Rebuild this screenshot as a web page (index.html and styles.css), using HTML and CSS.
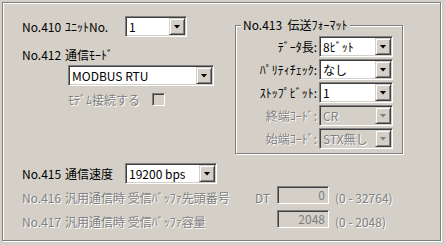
FILE: index.html
```
<!DOCTYPE html>
<html lang="ja">
<head>
<meta charset="utf-8">
<link rel="stylesheet" href="styles.css">
</head>
<body>
<div class="frame">
  <div class="top">
    <div class="left">
      <div class="row">
        <span class="no">No.410</span><span class="lbl">ﾕﾆｯﾄNo.</span>
        <div class="combo w-unit"><span class="val">1</span><span class="btn"></span></div>
      </div>
      <div class="row row-412">
        <span class="no">No.412</span><span class="lbl">通信ﾓｰﾄﾞ</span>
      </div>
      <div class="combo w-mode"><span class="val">MODBUS RTU</span><span class="btn"></span></div>
      <div class="modem">
        <span class="dis">ﾓﾃﾞﾑ接続する</span><span class="check"></span>
      </div>
    </div>
    <div class="group">
      <span class="gtitle">No.413&nbsp; 伝送ﾌｫｰﾏｯﾄ</span>
      <div class="grid">
        <span class="glbl">ﾃﾞｰﾀ長:</span>
        <div class="combo"><span class="val">8ﾋﾞｯﾄ</span><span class="btn"></span></div>
        <span class="glbl">ﾊﾟﾘﾃｨﾁｪｯｸ:</span>
        <div class="combo"><span class="val">なし</span><span class="btn"></span></div>
        <span class="glbl">ｽﾄｯﾌﾟﾋﾞｯﾄ:</span>
        <div class="combo"><span class="val">1</span><span class="btn"></span></div>
        <span class="glbl dis">終端ｺｰﾄﾞ:</span>
        <div class="combo disabled"><span class="val">CR</span><span class="btn"></span></div>
        <span class="glbl dis">始端ｺｰﾄﾞ:</span>
        <div class="combo disabled"><span class="val">STX無し</span><span class="btn"></span></div>
      </div>
    </div>
  </div>
  <div class="bottom">
    <div class="row">
      <span class="no">No.415</span><span class="lbl">通信速度</span>
      <div class="combo w-speed"><span class="val">19200 bps</span><span class="btn"></span></div>
    </div>
    <div class="row row-buf">
      <span class="no dis">No.416</span><span class="lbl lbl-long dis">汎用通信時 受信ﾊﾞｯﾌｧ先頭番号</span>
      <span class="dt dis">DT</span>
      <span class="tbox">0</span>
      <span class="range dis">(0 - 32764)</span>
    </div>
    <div class="row row-buf row-417">
      <span class="no dis">No.417</span><span class="lbl lbl-long dis">汎用通信時 受信ﾊﾞｯﾌｧ容量</span>
      <span class="dt dis"></span>
      <span class="tbox">2048</span>
      <span class="range dis">(0 - 2048)</span>
    </div>
  </div>
</div>
</body>
</html>
```

FILE: styles.css
```
html, body {
  margin: 0;
  padding: 0;
  background: #d4d0c8;
}
body {
  font-family: "Noto Sans CJK JP", "Noto Sans", sans-serif;
  font-size: 12px;
  line-height: 14px;
  color: #000;
  width: 445px;
  height: 245px;
  overflow: hidden;
}
.frame {
  box-sizing: border-box;
  margin: 2px 0 0 2px;
  width: 439px;
  height: 239px;
  border: 1px solid #808080;
  box-shadow: inset 1px 1px 0 #fff, 1px 1px 0 #fff;
  padding: 13px 0 0 19px;
}
.top {
  display: flex;
  align-items: flex-start;
}
.left {
  width: 213px;
  display: flex;
  flex-direction: column;
  align-items: flex-start;
}
.row {
  display: flex;
  align-items: center;
  height: 21px;
}
.no {
  width: 43px;
  flex: none;
}
.lbl {
  width: 60px;
  flex: none;
}
.row-412 {
  margin-top: 10px;
  height: 16px;
}
.dis {
  color: #808080;
  text-shadow: 1px 1px 0 #fff;
}

/* combo box */
.combo {
  box-sizing: border-box;
  display: flex;
  height: 21px;
  width: 74px;
  padding: 1px;
  border: 1px solid;
  border-color: #808080 #fff #fff #808080;
  box-shadow: inset 1px 1px 0 #404040, inset -1px -1px 0 #d4d0c8;
  background: #fff;
}
.combo .val {
  flex: 1;
  padding-left: 2px;
  line-height: 17px;
  white-space: nowrap;
  overflow: hidden;
}
.combo .btn {
  box-sizing: border-box;
  width: 16px;
  height: 17px;
  flex: none;
  border: 1px solid;
  border-color: #d4d0c8 #404040 #404040 #d4d0c8;
  box-shadow: inset 1px 1px 0 #fff, inset -1px -1px 0 #808080;
  background: #d4d0c8;
  display: flex;
  align-items: center;
  justify-content: center;
}
.combo .btn::after {
  content: "";
  width: 7px;
  height: 4px;
  background: #000;
  clip-path: polygon(0 0, 100% 0, 50% 100%);
}
.combo.disabled {
  background: #d4d0c8;
}
.combo.disabled .val {
  color: #808080;
  text-shadow: 1px 1px 0 #fff;
}
.combo.disabled .btn::after {
  background: #808080;
}
.w-unit { width: 62px; }
.w-mode { width: 146px; margin: 2px 0 0 46px; }
.w-speed { width: 92px; }

.modem {
  display: flex;
  align-items: center;
  margin: 7px 0 0 46px;
  height: 13px;
}
.modem .dis {
  width: 84px;
}
.check {
  box-sizing: border-box;
  width: 13px;
  height: 13px;
  border: 1px solid;
  border-color: #808080 #fff #fff #808080;
  box-shadow: inset 1px 1px 0 #404040, inset -1px -1px 0 #d4d0c8;
  background: #d4d0c8;
}

/* group box */
.group {
  position: relative;
  box-sizing: border-box;
  width: 168px;
  height: 129px;
  margin-top: 9px;
  border: 1px solid #808080;
  box-shadow: inset 1px 1px 0 #fff, 1px 1px 0 #fff;
  padding: 10px 0 0 0;
}
.gtitle {
  position: absolute;
  top: -9px;
  left: 5px;
  padding: 0 2px;
  background: #d4d0c8;
  line-height: 16px;
  white-space: nowrap;
}
.grid {
  display: grid;
  grid-template-columns: 81px 74px;
  column-gap: 2px;
  row-gap: 2px;
  align-items: center;
}
.glbl {
  text-align: right;
  white-space: nowrap;
}

/* bottom */
.bottom {
  margin-top: 9px;
}
.row-buf {
  margin-top: 2px;
  height: 18px;
}
.row-buf .no,
.row-buf .lbl-long,
.row-buf .dt,
.row-buf .range {
  padding-top: 5px;
}
.row-417 {
  margin-top: 6px;
}
.lbl-long {
  width: 190px;
  white-space: nowrap;
}
.dt {
  width: 22px;
  flex: none;
}
.tbox {
  box-sizing: border-box;
  width: 52px;
  height: 18px;
  flex: none;
  border: 1px solid;
  border-color: #808080 #fff #fff #808080;
  box-shadow: inset 1px 1px 0 #404040, inset -1px -1px 0 #d4d0c8;
  background: #d4d0c8;
  color: #808080;
  text-align: right;
  padding-right: 3px;
  line-height: 16px;
}
.range {
  margin-left: 6px;
  white-space: nowrap;
}
```
